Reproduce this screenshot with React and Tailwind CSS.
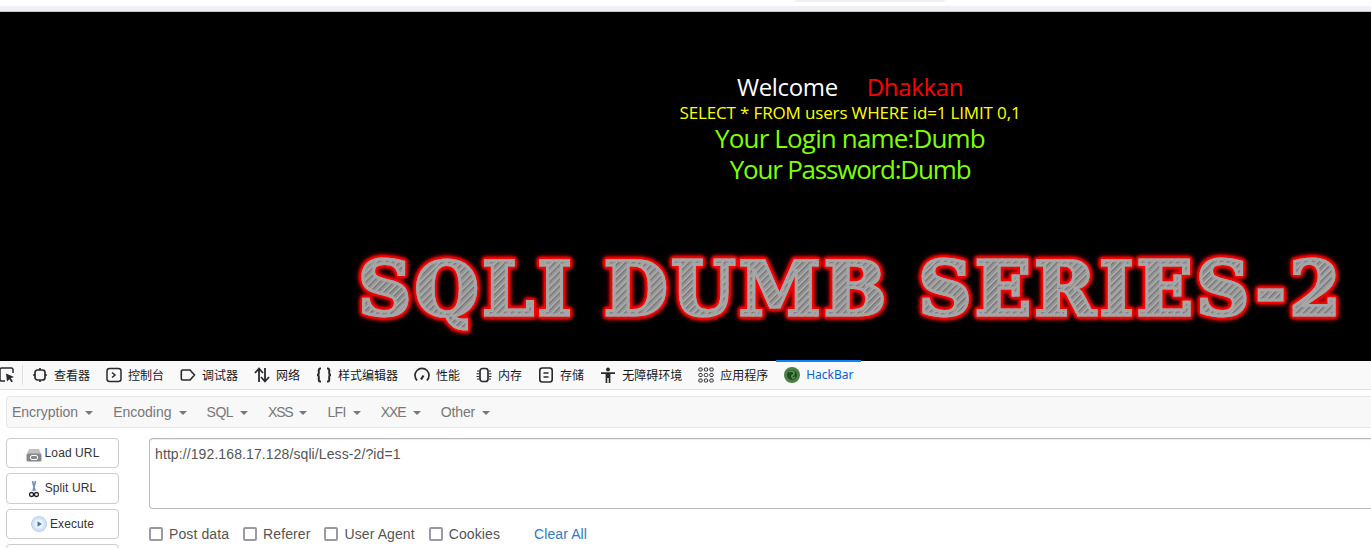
import React from 'react'

const CJK = "font-['Noto_Sans_CJK_SC','Noto_Sans',sans-serif]"

// devtools tab icons, 16px box
const icons = {
  inspector: (
    <svg viewBox="0 0 16 16" className="w-4 h-4" fill="none" stroke="#2b2b2f" strokeWidth="1.7">
      <rect x="3" y="3" width="10" height="10" rx="2.5" />
      <path d="M8 1v2M8 13v2M1 8h2M13 8h2" />
    </svg>
  ),
  console: (
    <svg viewBox="0 0 16 16" className="w-4 h-4" fill="none" stroke="#2b2b2f" strokeWidth="1.5">
      <rect x="1" y="1.5" width="14" height="13" rx="2.5" />
      <path d="M6 5.500 9 8l-3 2.500" />
    </svg>
  ),
  debugger: (
    <svg viewBox="0 0 16 16" className="w-4 h-4" fill="none" stroke="#2b2b2f" strokeWidth="1.6">
      <path d="M2.500 3h7.500l4.500 5-4.500 5H2.500a1.200 1.200 0 0 1-1.200-1.200V4.200A1.200 1.200 0 0 1 2.500 3z" />
    </svg>
  ),
  network: (
    <svg viewBox="0 0 16 16" className="w-4 h-4" fill="none" stroke="#2b2b2f" strokeWidth="1.8">
      <path d="M5 15V2M1 6l4-4.500L9 6M11 1v13M7 10l4 4.500 4-4.500" />
    </svg>
  ),
  style: (
    <svg viewBox="0 0 16 16" className="w-4 h-4" fill="none" stroke="#2b2b2f" strokeWidth="2">
      <path d="M5 1.500H4C3 1.500 2.800 2.200 2.800 3v3C2.800 7 2.200 8 1 8c1.200 0 1.800 1 1.800 2v3c0 .8.200 1.500 1.200 1.500h1M11 1.500h1c1 0 1.200.7 1.200 1.500v3c0 1 .6 2 1.800 2-1.200 0-1.800 1-1.800 2v3c0 .8-.2 1.500-1.200 1.500h-1" />
    </svg>
  ),
  perf: (
    <svg viewBox="0 0 16 16" className="w-4 h-4" fill="none" stroke="#2b2b2f" strokeWidth="1.7">
      <path d="M3.200 13.500A7 7 0 1 1 12.800 13.500" />
      <path d="M7 12.500l2.500-4" strokeWidth="2.200" />
    </svg>
  ),
  memory: (
    <svg viewBox="0 0 16 16" className="w-4 h-4" fill="none" stroke="#2b2b2f" strokeWidth="1.4">
      <rect x="4" y="1.500" width="8" height="13" rx="2.500" strokeWidth="1.7" />
      <path d="M1 4h2M0.500 6.800h2.500M0.500 9.500h2.500M1 12h2M13 4h2M13 6.800h2.500M13 9.500h2.500M13 12h2" strokeWidth="1" />
    </svg>
  ),
  storage: (
    <svg viewBox="0 0 16 16" className="w-4 h-4" fill="none" stroke="#2b2b2f" strokeWidth="1.6">
      <rect x="1.800" y="1" width="12.400" height="14" rx="2.500" />
      <path d="M5.500 6h5M5.500 10h5" />
    </svg>
  ),
  a11y: (
    <svg viewBox="0 0 16 16" className="w-4 h-4" fill="#2b2b2f">
      <circle cx="8" cy="2.500" r="2" />
      <path d="M1 5.200h14v1.700h-4.600V16H8.700v-5H7.300v5H5.600V6.900H1z" />
    </svg>
  ),
  apps: (
    <svg viewBox="0 0 16 16" className="w-4 h-4" fill="none" stroke="#2b2b2f" strokeWidth="1">
      {[2.500, 8, 13.500].map(y => [2.500, 8, 13.500].map(x => (
        <rect key={`${x}-${y}`} x={x - 1.7} y={y - 1.5} width="3.400" height="3" rx="1" />
      )))}
    </svg>
  ),
  hackbar: (
    <svg viewBox="0 0 16 16" className="w-4 h-4">
      <circle cx="8" cy="8" r="8" fill="#4a8046" />
      <circle cx="8" cy="8" r="5" fill="#234a25" />
      <path d="M5 5c3-2 6 0 5 2s-3 1-2 3 2 1 3 0" fill="none" stroke="#5aa155" strokeWidth="1.400" />
    </svg>
  ),
}

const TABS = [
  ['inspector', '查看器'],
  ['console', '控制台'],
  ['debugger', '调试器'],
  ['network', '网络'],
  ['style', '样式编辑器'],
  ['perf', '性能'],
  ['memory', '内存'],
  ['storage', '存储'],
  ['a11y', '无障碍环境'],
  ['apps', '应用程序'],
]

// tracking per item: the screenshot's hinted Arial runs tighter on capitals
const MENU = [
  { label: 'Encryption', cls: '' },
  { label: 'Encoding', cls: '' },
  { label: 'SQL', cls: 'tracking-[-0.5px]' },
  { label: 'XSS', cls: 'tracking-[-1.2px]' },
  { label: 'LFI', cls: 'tracking-[-0.7px]' },
  { label: 'XXE', cls: 'tracking-[-1px]' },
  { label: 'Other', cls: 'tracking-[-0.1px]' },
]
const OPTIONS = ['Post data', 'Referer', 'User Agent', 'Cookies']

function LoadIcon() {
  return (
    <svg viewBox="0 0 16 14" className="w-4 h-[14px] mr-[3px] mt-[3px]">
      <path d="M3 1h10l2 5H1z" fill="#bfc2c4" />
      <rect x="0.500" y="5.500" width="15" height="8" rx="1.500" fill="#85898c" />
      <rect x="4.500" y="7.500" width="7" height="4" rx="1.500" fill="none" stroke="#fff" strokeWidth="1" />
    </svg>
  )
}

function ScissorsIcon() {
  return (
    <svg viewBox="0 0 10 18" className="w-2.5 h-[18px] mr-1.5" fill="none">
      <path d="M3.500 1 6 11M6.500 1 4 11" stroke="#6f93b8" strokeWidth="1.600" />
      <circle cx="2.500" cy="14.500" r="2" stroke="#222" strokeWidth="1.300" />
      <circle cx="7.500" cy="14.500" r="2" stroke="#222" strokeWidth="1.300" />
    </svg>
  )
}

function PlayIcon() {
  return (
    <svg viewBox="0 0 16 16" className="w-4 h-4 mr-[3px]">
      <circle cx="8" cy="8" r="7.500" fill="#d5e3f5" stroke="#b8cde8" />
      <circle cx="8" cy="8" r="4.500" fill="#eef4fb" />
      <path d="M6.500 5.200 10.800 8l-4.300 2.800z" fill="#3f76bb" />
    </svg>
  )
}

export default function App() {
  return (
    <div className="w-[1371px] h-[548px] overflow-hidden bg-white flex flex-col font-['Liberation_Sans',sans-serif]">
      {/* browser chrome sliver */}
      <div className="h-3 shrink-0 flex flex-col">
        <div className="h-1.5 bg-white pl-[795px]">
          <div className="w-[150px] h-0.5 bg-[#f0f0f4] rounded-b" />
        </div>
        <div className="flex-1 bg-[#f0f0f4] border-b border-[#c8c8cc]" />
      </div>

      {/* page */}
      <div className="h-[349px] shrink-0 bg-black flex flex-col overflow-hidden">
        <div className="pl-[329px] pt-[60px] flex flex-col items-center font-['Open_Sans',sans-serif]">
          <div className="text-[24px] leading-[30px] tracking-[-0.35px] text-white whitespace-pre">
            Welcome<span className="ml-[29px] text-[#ff0000]">Dhakkan</span>
          </div>
          <div className="text-[17px] leading-[22px] tracking-[-0.15px] text-[#ffff00] whitespace-pre">
            SELECT * FROM users WHERE id=1 LIMIT 0,1
          </div>
          <div className="text-[26px] leading-[31px] -mt-[1px] tracking-[-0.85px] text-[#7fff00]">Your Login name:Dumb</div>
          <div className="text-[26px] leading-[31px] tracking-[-1.2px] text-[#7fff00]">Your Password:Dumb</div>
        </div>
        <div
          className="mt-[58px] ml-[358px] w-[1000px] whitespace-nowrap font-['DejaVu_Serif',serif] font-bold text-[74px] leading-[92px] tracking-[3.1px] text-transparent bg-clip-text bg-[repeating-linear-gradient(135deg,#8a8a8a_0px,#b4b4b4_1.5px,#767676_3px,#a2a2a2_5px)] [-webkit-text-stroke:3px_#a6a6a6] [filter:drop-shadow(0_0_1px_#ff0000)_drop-shadow(0_0_1px_#ff0000)_drop-shadow(0_0_1px_#ff0000)_drop-shadow(0_0_1px_#ff0000)_drop-shadow(0_0_2px_#e00000)]"
        >
          SQLI DUMB SERIES-2
        </div>
      </div>

      {/* devtools tabs */}
      <div className={`h-[29px] shrink-0 flex items-stretch bg-[#f9f9fa] border-b border-[#e0e0e2] text-[12px] text-[#18181a] ${CJK}`}>
        <div className="w-[23px] shrink-0 overflow-hidden flex items-center border-r border-[#e0e0e2] my-1">
          <svg viewBox="0 0 16 16" className="w-4 h-4 shrink-0 -ml-[1px]" fill="none" stroke="#2b2b2f" strokeWidth="1.500">
            <path d="M6 14H2.500A1.500 1.500 0 0 1 1 12.500v-10A1.500 1.500 0 0 1 2.500 1h10A1.500 1.500 0 0 1 14 2.500V6" />
            <path d="M7 6.500 15 10l-3.300 1.300 2.300 3-1.500 1-2.200-3L8 14.500z" fill="#2b2b2f" stroke="none" />
          </svg>
        </div>
        <div className="w-px shrink-0" />
        {TABS.map(([icon, label]) => (
          <div key={label} className="flex items-center gap-1.5 px-2">
            {icons[icon]}
            <span>{label}</span>
          </div>
        ))}
        <div className="flex items-center gap-1.5 px-2 text-[#0a60d8] border-t-2 border-[#0a84ff] -mt-[1px] pb-[1px] font-['Noto_Sans',sans-serif]">
          {icons.hackbar}
          <span>HackBar</span>
        </div>
      </div>

      {/* hackbar */}
      <div className="flex-1 min-h-0 pl-1.5 pt-[6px] overflow-hidden">
        <div className="h-[32px] bg-[#f8f8f8] border border-[#e7e7e7] border-r-0 rounded-l flex items-center gap-5 pl-[5px] text-[14px] text-[#777777]">
          {MENU.map(item => (
            <div key={item.label} className="flex items-center">
              <span className={item.cls}>{item.label}</span>
              <span className="ml-[7px] mt-[1px] w-0 h-0 border-x-4 border-x-transparent border-t-4 border-t-[#777777]" />
            </div>
          ))}
        </div>

        <div className="flex mt-2.5 gap-[30px]">
          <div className="w-[113px] shrink-0 flex flex-col gap-[5px] text-[12px] tracking-[0.1px] text-[#333333]">
            <button type="button" className="h-[30px] shrink-0 border border-[#cccccc] rounded flex items-center justify-center bg-white">
              <LoadIcon /><span className="-mt-[1px]">Load URL</span>
            </button>
            <button type="button" className="h-[31px] shrink-0 border border-[#cccccc] rounded flex items-center justify-center bg-white">
              <ScissorsIcon /><span className="-mt-[1px]">Split URL</span>
            </button>
            <button type="button" className="h-[30px] shrink-0 border border-[#cccccc] rounded flex items-center justify-center bg-white">
              <PlayIcon /><span>Execute</span>
            </button>
            <div className="h-[30px] shrink-0 border border-[#cccccc] rounded bg-white" />
          </div>

          <div className="flex-1 min-w-0">
            <div className="h-[71px] border border-[#bbbbbb] border-r-0 rounded-l px-[5px] pt-[7px] text-[14px] leading-[16px] tracking-[0.1px] text-[#555555] shadow-[inset_0_1px_1px_rgba(0,0,0,0.075)]">
              http://192.168.17.128/sqli/Less-2/?id=1
            </div>
            <div className="flex items-center mt-[15px] text-[14px] leading-[20px] tracking-[0.1px] text-[#555555]">
              {OPTIONS.map(opt => (
                <label key={opt} className="flex items-center mr-[14px]">
                  <span className="w-[14px] h-[14px] border-2 border-[#9a9aa5] rounded-[2px] bg-white mr-1.5" />
                  {opt}
                </label>
              ))}
              <span className="ml-5 text-[#337ab7]">Clear All</span>
            </div>
          </div>
        </div>
      </div>
    </div>
  )
}
